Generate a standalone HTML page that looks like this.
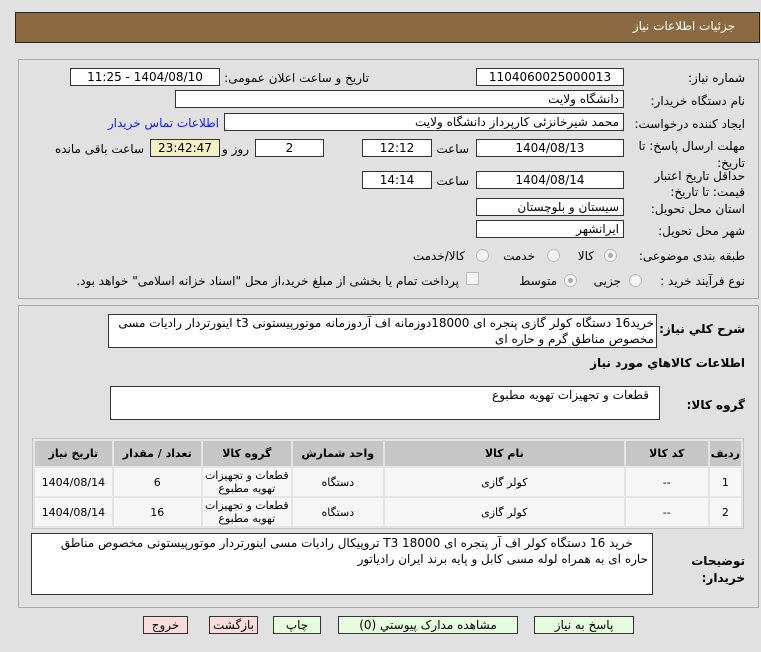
<!DOCTYPE html>
<html><head><meta charset="utf-8"><style>
body{margin:0;width:761px;height:652px;background:#e1e1e1;font-family:"DejaVu Sans","Liberation Sans",sans-serif;font-size:12px;color:#000;position:relative;overflow:hidden;direction:rtl}
.a{position:absolute;white-space:nowrap}
.f{position:absolute;background:#fff;border:1px solid #333;box-sizing:border-box;height:18px;line-height:16px;font-size:12px}
.c{text-align:center}
.r{text-align:right;padding-right:4px}
.l{position:absolute;white-space:nowrap;text-align:right}
.rad{position:absolute;width:13px;height:13px;border-radius:50%;border:1px solid #bbb;background:#f4f4f4;box-sizing:border-box}
.rad.on::after{content:"";position:absolute;left:3px;top:3px;width:5px;height:5px;border-radius:50%;background:#aaa}
.btn{position:absolute;top:616px;height:18px;border:1px solid #333;box-sizing:border-box;text-align:center;line-height:16px;font-size:12px}
table{position:absolute;left:32px;top:438px;width:712px;border-collapse:separate;border-spacing:2px;background:#e4e4e4;border:1px solid #c4c4c4;font-size:11px}
td,th{text-align:center;height:26px}
th{background:#c6c6c6;font-weight:bold;height:23px}
td{background:#f6f6f6}
</style></head><body>
<div class="a" style="left:15px;top:12px;width:745px;height:31px;background:#8b6a41;border:1px solid #222;box-sizing:border-box"></div>
<div class="a" style="right:26px;top:19px;color:#fff;font-size:12px">جزئیات اطلاعات نیاز</div>

<div class="a" style="left:18px;top:59px;width:741px;height:240px;border:1px solid #aaa;box-sizing:border-box"></div>

<div class="l" style="right:16px;top:71px">شماره نیاز:</div>
<div class="f c" style="left:476px;top:68px;width:148px">1104060025000013</div>
<div class="l" style="right:392px;top:71px">تاریخ و ساعت اعلان عمومی:</div>
<div class="f c" style="left:70px;top:68px;width:150px">1404/08/10 - 11:25</div>

<div class="l" style="right:16px;top:94px">نام دستگاه خریدار:</div>
<div class="f r" style="left:175px;top:90px;width:449px">دانشگاه ولایت</div>

<div class="l" style="right:16px;top:117px">ایجاد کننده درخواست:</div>
<div class="f r" style="left:224px;top:113px;width:400px">محمد شیرخانزئی کارپرداز دانشگاه ولایت</div>
<div class="l" style="right:542px;top:116px;color:#1a1aff">اطلاعات تماس خریدار</div>

<div class="l" style="right:16px;top:138px;line-height:17px;text-align:right">مهلت ارسال پاسخ: تا<br>تاریخ:</div>
<div class="f c" style="left:476px;top:139px;width:148px">1404/08/13</div>
<div class="l" style="right:292px;top:142px">ساعت</div>
<div class="f c" style="left:362px;top:139px;width:70px">12:12</div>
<div class="f c" style="left:255px;top:139px;width:69px">2</div>
<div class="l" style="right:512px;top:142px">روز و</div>
<div class="f c" style="left:150px;top:139px;width:70px;background:#f3f0c6">23:42:47</div>
<div class="l" style="right:617px;top:142px">ساعت باقی مانده</div>

<div class="l" style="right:16px;top:168px;line-height:16px">حداقل تاریخ اعتبار<br>قیمت: تا تاریخ:</div>
<div class="f c" style="left:476px;top:171px;width:148px">1404/08/14</div>
<div class="l" style="right:292px;top:174px">ساعت</div>
<div class="f c" style="left:362px;top:171px;width:70px">14:14</div>

<div class="l" style="right:16px;top:202px">استان محل تحویل:</div>
<div class="f r" style="left:476px;top:198px;width:148px">سیستان و بلوچستان</div>
<div class="l" style="right:16px;top:224px">شهر محل تحویل:</div>
<div class="f r" style="left:476px;top:220px;width:148px">ایرانشهر</div>

<div class="l" style="right:16px;top:249px">طبقه بندی موضوعی:</div>
<div class="rad on" style="left:604px;top:249px"></div><div class="l" style="right:167px;top:249px">کالا</div>
<div class="rad" style="left:547px;top:249px"></div><div class="l" style="right:226px;top:249px">خدمت</div>
<div class="rad" style="left:476px;top:249px"></div><div class="l" style="right:296px;top:249px">کالا/خدمت</div>

<div class="l" style="right:16px;top:274px">نوع فرآیند خرید :</div>
<div class="rad" style="left:629px;top:274px"></div><div class="l" style="right:140px;top:274px">جزیی</div>
<div class="rad on" style="left:564px;top:274px"></div><div class="l" style="right:204px;top:274px">متوسط</div>
<div class="a" style="left:466px;top:272px;width:13px;height:13px;border:1px solid #bbb;background:#f4f4f4;box-sizing:border-box"></div>
<div class="l" style="right:302px;top:274px">پرداخت تمام یا بخشی از مبلغ خرید،از محل "اسناد خزانه اسلامی" خواهد بود.</div>

<div class="a" style="left:18px;top:305px;width:741px;height:303px;border:1px solid #aaa;box-sizing:border-box"></div>
<div class="l" style="right:16px;top:322px;font-weight:bold">شرح کلي نياز:</div>
<div class="f" style="left:108px;top:314px;width:549px;height:34px;white-space:normal;text-align:right;padding-right:2px;line-height:16px">خرید16 دستگاه کولر گازی پنجره ای 18000دوزمانه اف آردوزمانه موتورپیستونی t3 اینورتردار رادیات مسی مخصوص مناطق گرم و حاره ای</div>
<div class="l" style="right:16px;top:356px;font-weight:bold">اطلاعات کالاهاي مورد نياز</div>
<div class="l" style="right:16px;top:398px;font-weight:bold">گروه کالا:</div>
<div class="f" style="left:110px;top:386px;width:550px;height:34px;text-align:right;padding-right:10px">قطعات و تجهیزات تهویه مطبوع</div>

<table>
<tr><th style="width:27px">ردیف</th><th style="width:80px">کد کالا</th><th style="width:237px">نام کالا</th><th style="width:88px">واحد شمارش</th><th style="width:86px">گروه کالا</th><th style="width:85px">تعداد / مقدار</th><th>تاریخ نیاز</th></tr>
<tr><td>1</td><td>--</td><td>کولر گازی</td><td>دستگاه</td><td style="line-height:13px">قطعات و تجهیزات<br>تهویه مطبوع</td><td>6</td><td>1404/08/14</td></tr>
<tr><td>2</td><td>--</td><td>کولر گازی</td><td>دستگاه</td><td style="line-height:13px">قطعات و تجهیزات<br>تهویه مطبوع</td><td>16</td><td>1404/08/14</td></tr>
</table>

<div class="l" style="right:16px;top:553px;font-weight:bold;line-height:17px">توضیحات<br>خریدار:</div>
<div class="f" style="left:31px;top:533px;width:622px;height:62px;white-space:normal;text-align:right;padding:1px 4px 0 4px;line-height:16px">&nbsp;&nbsp;&nbsp;&nbsp;خرید 16 دستگاه کولر اف آر پنجره ای 18000 T3 تروپیکال رادیات مسی اینورتردار موتورپیستونی مخصوص مناطق حاره ای به همراه لوله مسی کابل و پایه برند ایران رادیاتور</div>

<div class="btn" style="left:534px;width:100px;background:#e6fbe0">پاسخ به نیاز</div>
<div class="btn" style="left:338px;width:180px;background:#e6fbe0">مشاهده مدارک پیوستي (0)</div>
<div class="btn" style="left:273px;width:48px;background:#e6fbe0">چاپ</div>
<div class="btn" style="left:209px;width:49px;background:#fbdcdc">بازگشت</div>
<div class="btn" style="left:143px;width:45px;background:#fbdcdc">خروج</div>
</body></html>
